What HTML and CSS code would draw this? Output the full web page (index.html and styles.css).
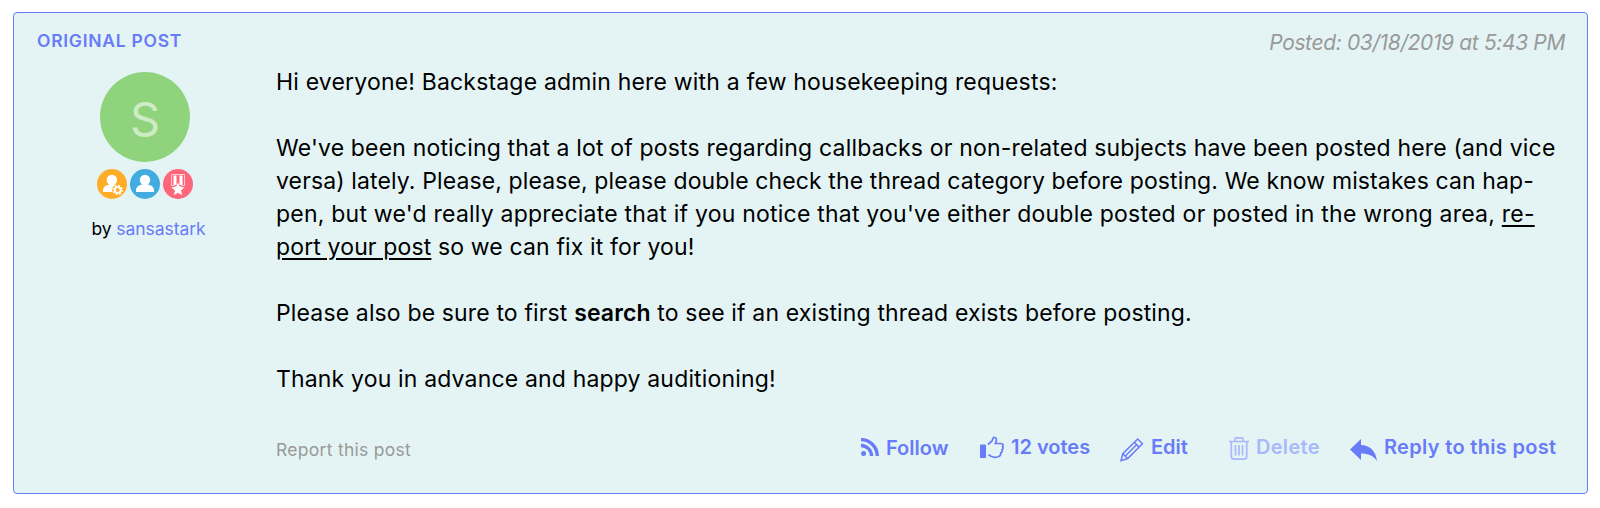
FILE: index.html
```html
<!DOCTYPE html>
<html lang="en">
<head>
    <meta charset="UTF-8">
    <title>Original post</title>
    <link rel="stylesheet" href="styles.css">
</head>
<body>
    <div class="post">
        <div class="post-header">
            <div class="post-label">ORIGINAL POST</div>
            <div class="post-date">Posted: 03/18/2019 at 5:43 PM</div>
        </div>

        <div class="post-body">
            <div class="author">
                <div class="avatar">S</div>
                <div class="badges">
                    <svg width="30" height="30" viewBox="0 0 30 30">
                        <circle cx="15" cy="15" r="15" fill="#ffac27"/>
                        <circle cx="14.8" cy="11" r="5.2" fill="#fff"/>
                        <path d="M6 23v-1.500c0-3 2-5.300 6-6h5.500c2 .3 4 1.200 5 3V23z" fill="#fff"/>
                        <circle cx="20.7" cy="21" r="5.6" fill="#ffac27"/>
                        <circle cx="20.7" cy="21" r="4.400" fill="none" stroke="#fff" stroke-width="1.600" stroke-dasharray="1.728 1.728"/>
                        <circle cx="20.7" cy="21" r="2.900" fill="none" stroke="#fff" stroke-width="1.900"/>
                    </svg>
                    <svg width="30" height="30" viewBox="0 0 30 30">
                        <circle cx="15" cy="15" r="15" fill="#42ace0"/>
                        <circle cx="15" cy="11" r="5.2" fill="#fff"/>
                        <path d="M6 23v-1.500c0-3.500 2.600-5.500 6-6h6c3.400.5 6 2.500 6 6V23z" fill="#fff"/>
                    </svg>
                    <svg width="30" height="30" viewBox="0 0 30 30">
                        <circle cx="15" cy="15" r="15" fill="#ff667a"/>
                        <path d="M8.500 5.500h13v11h-2.500l-4 2.500-4-2.500H8.500z" fill="none" stroke="#fff" stroke-opacity=".65"/>
                        <path d="M10.500 6.500h3v9.500h-3zM16.500 6.500h3v9.500h-3z" fill="#fff"/>
                        <path d="M15 13.500l1.900 4.400 4.700.4-3.500 3.200 1 4.800-4.100-2.500-4.100 2.500 1-4.800-3.500-3.200 4.700-.4z" fill="#fff"/>
                    </svg>
                </div>
                <div class="byline">by <a href="#">sansastark</a></div>
            </div>

            <div class="content">
                <p><span class="l1">Hi everyone! Backstage admin here with a few housekeeping requests:</span></p>
                <p>
                    <span class="l2">We've been noticing that a lot of posts regarding callbacks or non-related subjects have been posted here (and vice</span><br>
                    <span class="l3">versa) lately. Please, please, please double check the thread category before posting. We know mistakes can hap-</span><br>
                    <span class="l4">pen, but we'd really appreciate that if you notice that you've either double posted or posted in the wrong area, <u>re-</u></span><br>
                    <span class="l5"><u>port your post</u> so we can fix it for you!</span>
                </p>
                <p><span class="l6">Please also be sure to first <b>search</b> to see if an existing thread exists before posting.</span></p>
                <p><span class="l7">Thank you in advance and happy auditioning!</span></p>
            </div>
        </div>

        <div class="post-footer">
            <a href="#" class="report">Report this post</a>
            <a href="#" class="action follow">
                <svg width="18" height="18" viewBox="0 0 18 18">
                    <circle cx="2.600" cy="15.400" r="2.500" fill="currentColor"/>
                    <path d="M0 7.500A10.500 10.500 0 0 1 10.500 18M0 1.700A16.300 16.300 0 0 1 16.300 18" fill="none" stroke="currentColor" stroke-width="3.300"/>
                </svg>
                <span>Follow</span>
            </a>
            <a href="#" class="action votes">
                <svg width="24" height="22" viewBox="0 0 24 22">
                    <rect x="0" y="7.500" width="6" height="13.500" rx="1" fill="currentColor"/>
                    <path d="M8 8l4-3.500 1-2.700c.6-1.500 3.500-1 3.500 1.200 0 1.600-.7 2.800-1.200 4H21c2.200 0 2.600 2 1.500 3.200 1 1 .6 2.500-.6 3.100.7 1.300.1 2.600-1.100 3 .2 1.700-.7 3.200-2.500 3.900-3 1-7.300.5-9.800-2" transform="translate(0 -.5)" fill="none" stroke="currentColor" stroke-width="1.700"/>
                </svg>
                <span>12 votes</span>
            </a>
            <a href="#" class="action edit">
                <svg width="24" height="24" viewBox="0 0 24 24" fill="none" stroke="currentColor" stroke-width="1.500">
                    <path d="M1 22.700l1.800-7L17.700 1l4.700 4.700L7.700 20.500zM2.800 15.700l4.900 4.800M5.300 18L16.800 6.500M14.300 4.300l4.800 4.800"/>
                </svg>
                <span>Edit</span>
            </a>
            <a href="#" class="action delete">
                <svg width="20" height="23" viewBox="0 0 20 23" fill="none" stroke="currentColor" stroke-width="1.700">
                    <path d="M0 4.500h20M6 4.500V2.300C6 1.300 6.500.9 7.400.9h5.200c.9 0 1.400.4 1.400 1.400v2.200M2.300 4.500v15c0 1.700.9 2.600 2.500 2.600h10.400c1.600 0 2.500-.9 2.500-2.600v-15M6.500 8v10.500M10 8v10.500M13.500 8v10.500"/>
                </svg>
                <span>Delete</span>
            </a>
            <a href="#" class="action reply">
                <svg width="27" height="22" viewBox="0 0 27 22">
                    <path d="M0 10.500L11 0v6c9 .3 14.500 5.500 16 16-4-5.500-8.500-7.500-16-7.500V21z" fill="currentColor"/>
                </svg>
                <span>Reply to this post</span>
            </a>
        </div>
    </div>
</body>
</html>
```
FILE: styles.css
```css
* {
    box-sizing: border-box;
}

body {
    margin: 12px 12px 0 13px;
    font-family: Inter, "Liberation Sans", sans-serif;
    color: #000;
    background: #fff;
}

a {
    color: #687bf8;
    text-decoration: none;
}

.post {
    height: 482px;
    padding: 18px 22px 0 22px;
    background: #e4f4f5;
    border: 1px solid #687bf8;
    border-radius: 4px;
}

.post-header {
    display: flex;
    justify-content: space-between;
    height: 35px;
    white-space: nowrap;
}

.post-label {
    padding-left: 1px;
    font-size: 17.5px;
    line-height: 20px;
    font-weight: 600;
    letter-spacing: 0.72px;
    color: #687bf8;
}

.post-date {
    font-size: 21px;
    line-height: 24px;
    font-style: italic;
    letter-spacing: -0.36px;
    color: #999;
}

.post-body {
    display: grid;
    grid-template-columns: 240px 1fr;
    height: 365px;
}

.author {
    display: flex;
    flex-direction: column;
    align-items: center;
    width: 218px;
    padding-top: 6px;
}

.avatar {
    width: 90px;
    height: 90px;
    border-radius: 50%;
    background: #8fd47c;
    color: #cdebc5;
    font-size: 47px;
    line-height: 94px;
    text-align: center;
}

.badges {
    display: flex;
    gap: 3px;
    margin-top: 7px;
}

.byline {
    margin: 19px 0 0 7px;
    font-size: 17.5px;
    line-height: 22px;
    letter-spacing: -0.06px;
}

.content {
    font-size: 23px;
    line-height: 33px;
    white-space: nowrap;
}

.content p {
    margin: 0 0 33px;
}

.content b {
    font-weight: 600;
}

.content u {
    text-decoration-thickness: 2px;
    text-underline-offset: 3px;
}

/* letter spacing for each line of the message */
.l1 { letter-spacing: 0.18px; }
.l2 { letter-spacing: 0.173px; }
.l3 { letter-spacing: 0.12px; }
.l4 { letter-spacing: 0.222px; }
.l5 { letter-spacing: 0.14px; }
.l6 { letter-spacing: 0.142px; }
.l7 { letter-spacing: 0.166px; }

.post-footer {
    display: flex;
    align-items: flex-start;
    height: 40px;
    padding: 6px 0 0 240px;
    white-space: nowrap;
}

.report {
    width: 585px;
    padding-top: 2px;
    font-size: 17.5px;
    line-height: 22px;
    letter-spacing: 0.28px;
    color: #999;
}

.action {
    display: flex;
    align-items: flex-start;
    font-size: 20px;
    line-height: 20px;
    font-weight: 600;
}

.action svg {
    flex: none;
    overflow: visible;
}

.follow {
    width: 119px;
    gap: 7px;
    line-height: 22px;
}

.follow svg {
    margin-top: 1px;
}

.votes {
    width: 140px;
    gap: 7px;
}

.edit {
    width: 109px;
    gap: 7px;
}

.delete {
    width: 121px;
    gap: 7px;
    letter-spacing: 0.3px;
    color: #a8b8fa;
}

.reply {
    gap: 7px;
    letter-spacing: 0.32px;
}

.reply svg {
    margin-top: 2px;
}

.edit svg {
    margin-top: 1px;
}
```
